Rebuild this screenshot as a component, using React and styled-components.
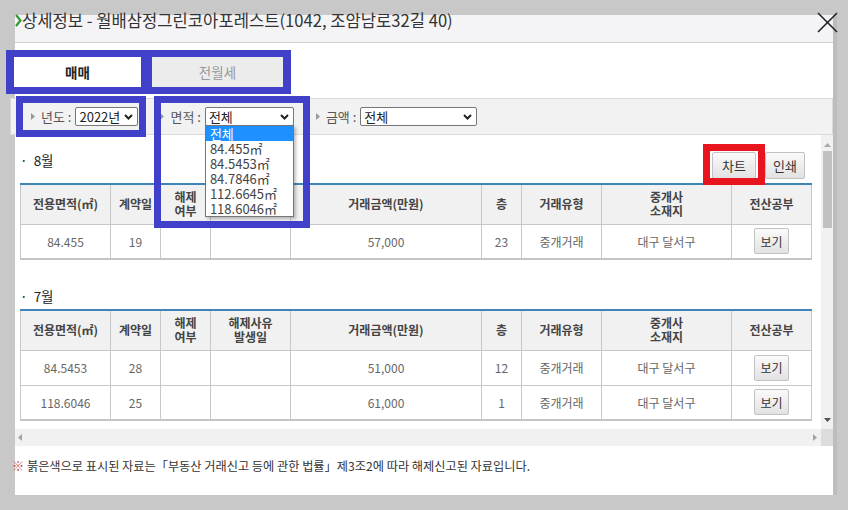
import styled, { createGlobalStyle } from 'styled-components'

const GlobalStyle = createGlobalStyle`
  html, body { margin: 0; padding: 0; background: #c8c8c8; }
  body { font-family: "Noto Sans CJK KR", "Noto Sans", sans-serif; }
  * { box-sizing: border-box; }
`

const Page = styled.div`
  width: 848px;
  height: 510px;
  padding: 15px;
  background: #c8c8c8;
  overflow: hidden;
`

const Modal = styled.div`
  position: relative;
  width: 818px;
  height: 480px;
  background: #fff;
  box-shadow: 4px 0 0 #bdbdbd;
  display: flex;
  flex-direction: column;
`

const TitleBar = styled.div`
  flex: none;
  height: 28px;
  background: #f4f4f6;
  border-bottom: 1px solid #d3d3d3;
  display: flex;
  align-items: flex-start;
  color: #333;
  font-size: 16.6px;
`

const TitleText = styled.span`
  line-height: 16px;
  margin-top: -3px;
  white-space: nowrap;
`

const Close = styled.div`
  position: absolute;
  top: -3px;
  right: -5px;
  width: 21px;
  height: 21px;
`

/* the blue highlight round the tabs shows through the gap between them */
const TabRow = styled.div`
  flex: none;
  display: flex;
  gap: 11px;
  width: 285px;
  margin: 7px 0 0 -9px;
  padding: 7px 8px;
  background: #4040c8;
`

const Tab = styled.div`
  width: ${p => p.$w}px;
  height: 30px;
  display: flex;
  align-items: center;
  justify-content: center;
  font-size: 13.5px;
  background: ${p => (p.$active ? '#fff' : '#ececec')};
  color: ${p => (p.$active ? '#222' : '#999')};
  font-weight: ${p => (p.$active ? 700 : 400)};
`

const Mark = styled.span`
  position: absolute;
  top: ${p => p.$t}px;
  right: ${p => p.$r}px;
  bottom: ${p => p.$b}px;
  left: ${p => p.$l}px;
  border: 7px solid ${p => p.$color || '#4040c8'};
  pointer-events: none;
  z-index: 20;
`

const FilterBar = styled.div`
  flex: none;
  height: 37px;
  margin: 4px 0 0 -5px;
  padding-left: 20px;
  background: #f2f2f2;
  border: 1px solid #dadada;
  display: flex;
  align-items: center;
  gap: 22px;
`

const FilterItem = styled.div`
  position: relative;
  height: 19px;
  display: flex;
  align-items: center;
  font-size: 13px;
  color: #555;
`

const Label = styled.span`
  margin: 0 4px 0 6px;
  white-space: nowrap;
`

const SelectWrap = styled.div`
  position: relative;
`

const Select = styled.div`
  width: ${p => p.$w}px;
  height: 19px;
  padding: 0 4px 0 3px;
  background: #fff;
  border: 1px solid #767676;
  border-radius: 2px;
  display: flex;
  align-items: center;
  justify-content: space-between;
  font-size: 13px;
  color: #222;
`

const DropList = styled.ul`
  position: absolute;
  top: 18px;
  left: 0;
  width: 89px;
  margin: 0;
  padding: 0;
  list-style: none;
  background: #fff;
  border: 1px solid #767676;
  box-shadow: 2px 2px 3px rgba(0, 0, 0, 0.25);
  z-index: 10;
`

const DropOption = styled.li`
  height: 15px;
  line-height: 15px;
  padding-left: 4px;
  font-size: 13px;
  color: ${p => (p.$selected ? '#fff' : '#444')};
  background: ${p => (p.$selected ? '#1e90ff' : '#fff')};
`

const Body = styled.div`
  flex: none;
  height: 294px;
  display: flex;
`

const Scroll = styled.div`
  flex: 1;
  overflow: hidden;
  padding: 15px 10px 0 5px;
`

const VBar = styled.div`
  width: 12px;
  background: #f1f1f1;
  display: flex;
  flex-direction: column;
  align-items: center;
  padding: 8px 0 7px;
`

const Thumb = styled.div`
  width: 9px;
  height: 77px;
  margin-top: 4px;
  background: #c1c1c1;
`

const Spacer = styled.div`
  flex: 1;
`

const SectionHead = styled.div`
  display: flex;
  justify-content: space-between;
  align-items: flex-start;
  padding-right: 6px;
  margin-top: ${p => p.$mt || 0}px;
`

const Heading = styled.div`
  font-size: 13.5px;
  line-height: 18px;
  margin-top: 1px;
  color: #222;
`

const Buttons = styled.div`
  display: flex;
  gap: 9px;
  margin-top: 2px;
`

const Btn = styled.button`
  position: relative;
  width: ${p => p.$w}px;
  height: ${p => p.$h || 27}px;
  padding: 0;
  font-family: inherit;
  font-size: ${p => p.$fs || 13}px;
  color: #333;
  background: linear-gradient(#fafafa, #e2e2e2);
  border: 1px solid #c2c2c2;
  border-radius: 2px;
`

const Table = styled.table`
  width: 791px;
  margin-top: 4px;
  border-collapse: collapse;
  table-layout: fixed;
  border-top: 2px solid #3f84b8;
  border-bottom: 2px solid #c4c4c4;

  th, td {
    border-left: 1px solid #c8c8c8;
    border-right: 1px solid #c8c8c8;
    text-align: center;
    padding: 0;
  }
  th {
    height: 40px;
    background: #f1f1f1;
    font-size: 12px;
    line-height: 14px;
    font-weight: 700;
    color: #444;
    border-bottom: 1px solid #c8c8c8;
  }
  td {
    height: 35px;
    font-size: 12px;
    color: #666;
    border-bottom: 1px solid #c8c8c8;
  }
`

const HBar = styled.div`
  flex: none;
  height: 17px;
  display: flex;
`

const HTrack = styled.div`
  flex: 1;
  background: #f1f1f1;
  display: flex;
  align-items: center;
  justify-content: space-between;
  padding: 0 4px 0 3px;
`

const Corner = styled.div`
  width: 12px;
  background: #dcdcdc;
`

const Note = styled.div`
  flex: none;
  height: 49px;
  padding-top: 12px;
  margin-left: -3px;
  font-size: 12.2px;
  line-height: 16px;
  color: #333;
  white-space: nowrap;
`

const NoteMark = styled.span`
  color: #c44;
`

const widths = [90, 50, 50, 80, 191, 40, 80, 130, 80]
const headers = [
  ['전용면적(㎡)'],
  ['계약일'],
  ['해제', '여부'],
  ['해제사유', '발생일'],
  ['거래금액(만원)'],
  ['층'],
  ['거래유형'],
  ['중개사', '소재지'],
  ['전산공부']
]

const sections = [
  { month: '8월', rows: [['84.455', '19', '', '', '57,000', '23', '중개거래', '대구 달서구']] },
  {
    month: '7월',
    rows: [
      ['84.5453', '28', '', '', '51,000', '12', '중개거래', '대구 달서구'],
      ['118.6046', '25', '', '', '61,000', '1', '중개거래', '대구 달서구']
    ]
  }
]

const areaOptions = ['전체', '84.455㎡', '84.5453㎡', '84.7846㎡', '112.6645㎡', '118.6046㎡']

const Chevron = () => (
  <svg width='9' height='6' viewBox='0 0 9 6'>
    <polyline points='1,1 4.5,4.5 8,1' fill='none' stroke='#222' strokeWidth='2' />
  </svg>
)

const Tri = ({ dir = 'right', color = '#999' }) => {
  const pts = {
    right: '0,0 4,3.5 0,7',
    left: '4,0 0,3.5 4,7',
    up: '0,4 3.5,0 7,4',
    down: '0,0 7,0 3.5,4'
  }[dir]
  const vertical = dir === 'up' || dir === 'down'
  return (
    <svg width={vertical ? 7 : 4} height={vertical ? 4 : 7} viewBox={vertical ? '0 0 7 4' : '0 0 4 7'}>
      <polygon points={pts} fill={color} />
    </svg>
  )
}

const DataTable = ({ rows }) => (
  <Table>
    <colgroup>
      {widths.map((w, i) => <col key={i} style={{ width: w }} />)}
    </colgroup>
    <thead>
      <tr>
        {headers.map((h, i) => (
          <th key={i}>{h.map((line, j) => <div key={j}>{line}</div>)}</th>
        ))}
      </tr>
    </thead>
    <tbody>
      {rows.map((r, i) => (
        <tr key={i}>
          {r.map((c, j) => <td key={j}>{c}</td>)}
          <td><Btn $w={35} $h={26} $fs={12}>보기</Btn></td>
        </tr>
      ))}
    </tbody>
  </Table>
)

const App = () => (
  <Page>
    <GlobalStyle />
    <Modal>
      <TitleBar>
        <svg width='7' height='13' viewBox='0 0 7 13' style={{ flex: 'none', marginTop: -1 }}>
          <polyline points='1,1 5.5,6.5 1,12' fill='none' stroke='#2f9a2f' strokeWidth='2.2' />
        </svg>
        <TitleText>상세정보 - 월배삼정그린코아포레스트(1042, 조암남로32길 40)</TitleText>
      </TitleBar>
      <Close>
        <svg width='21' height='21' viewBox='0 0 21 21'>
          <line x1='1' y1='1' x2='20' y2='20' stroke='#222' strokeWidth='1.6' />
          <line x1='20' y1='1' x2='1' y2='20' stroke='#222' strokeWidth='1.6' />
        </svg>
      </Close>

      <TabRow>
        <Tab $w={127} $active>매매</Tab>
        <Tab $w={131}>전월세</Tab>
      </TabRow>

      <FilterBar>
        <FilterItem>
          <Tri />
          <Label>년도 :</Label>
          <Select $w={63}>2022년<Chevron /></Select>
          <Mark $t={-11} $r={-8} $b={-11} $l={-15} />
        </FilterItem>
        <FilterItem>
          <Tri />
          <Label>면적 :</Label>
          <SelectWrap>
            <Select $w={89}>전체<Chevron /></Select>
            <DropList>
              {areaOptions.map((o, i) => <DropOption key={o} $selected={i === 0}>{o}</DropOption>)}
            </DropList>
          </SelectWrap>
          <Mark $t={-11} $r={-16} $b={-102} $l={-6} />
        </FilterItem>
        <FilterItem>
          <Tri />
          <Label>금액 :</Label>
          <Select $w={117}>전체<Chevron /></Select>
        </FilterItem>
      </FilterBar>

      <Body>
        <Scroll>
          {sections.map((s, i) => (
            <div key={s.month}>
              <SectionHead $mt={i === 0 ? 0 : 26}>
                <Heading>·&nbsp; {s.month}</Heading>
                {i === 0 && (
                  <Buttons>
                    <Btn $w={44}>
                      차트
                      <Mark $color='#e8151f' $t={-9} $r={-10} $b={-7} $l={-10} />
                    </Btn>
                    <Btn $w={40}>인쇄</Btn>
                  </Buttons>
                )}
              </SectionHead>
              <DataTable rows={s.rows} />
            </div>
          ))}
        </Scroll>
        <VBar>
          <Tri dir='up' color='#a9a9a9' />
          <Thumb />
          <Spacer />
          <Tri dir='down' color='#505050' />
        </VBar>
      </Body>

      <HBar>
        <HTrack>
          <Tri dir='left' color='#a3a3a3' />
          <Tri dir='right' color='#a3a3a3' />
        </HTrack>
        <Corner />
      </HBar>

      <Note>
        <NoteMark>※</NoteMark> 붉은색으로 표시된 자료는「부동산 거래신고 등에 관한 법률」제3조2에 따라 해제신고된 자료입니다.
      </Note>
    </Modal>
  </Page>
)

export default App
